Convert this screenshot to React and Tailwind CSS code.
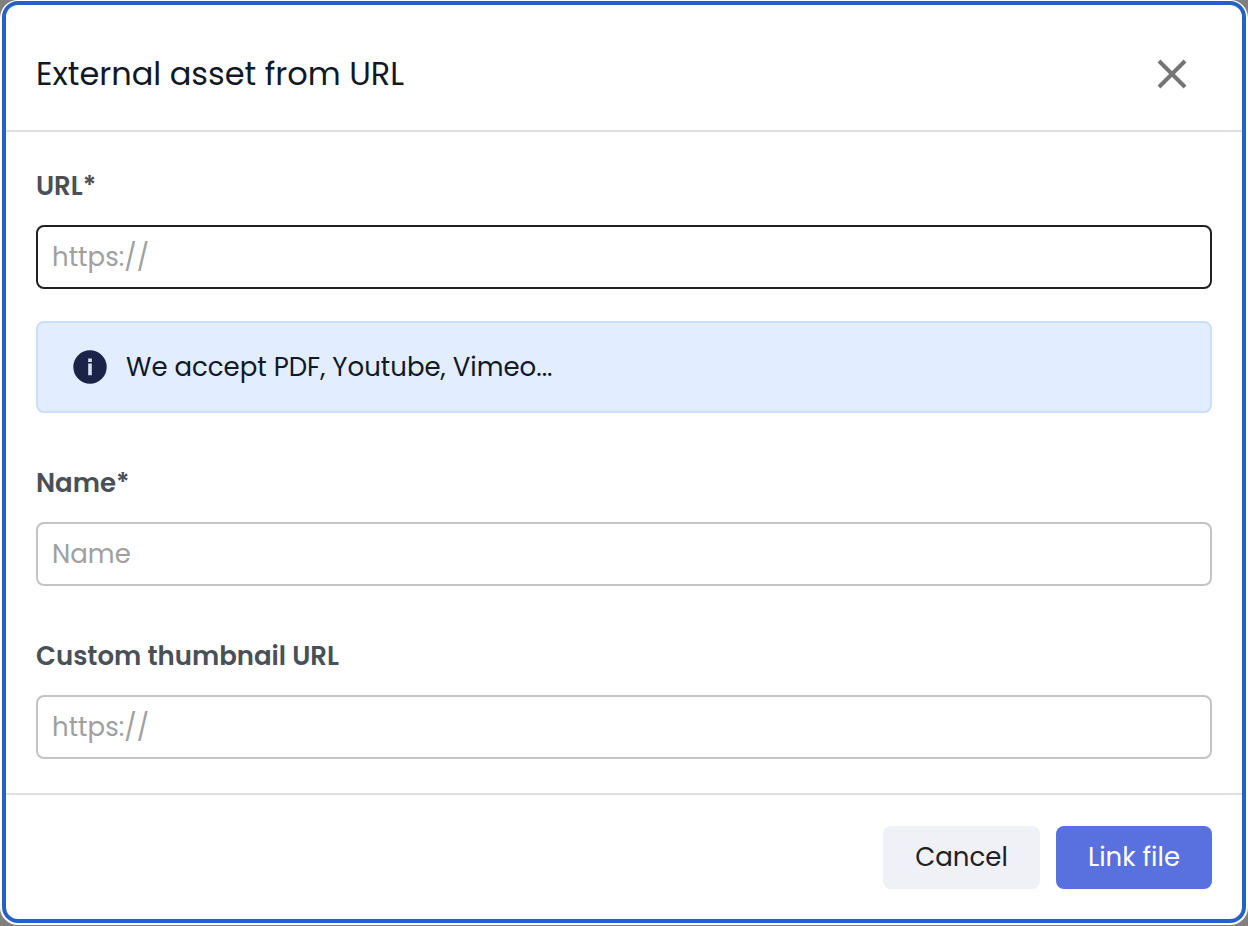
import React from "react";

function Field({ id, label, placeholder, strong }) {
  return (
    <div className="flex flex-col gap-[19px]">
      <label htmlFor={id} className="self-start text-[26px] leading-[39px] font-semibold text-[#495057]">
        {label}
      </label>
      <input
        id={id}
        type="text"
        placeholder={placeholder}
        className={
          "h-16 w-full rounded-lg border-2 bg-white px-3.5 text-[26px] text-[#212529] outline-none placeholder:text-[#a0a0a0] " +
          (strong ? "border-[#212121]" : "border-[#c4c4c4]")
        }
      />
    </div>
  );
}

export default function App() {
  return (
    <div className="flex min-h-screen flex-col bg-[#808080] pb-px font-[Poppins,Inter,sans-serif]">
      <div className="flex grow flex-col rounded-[18px] bg-white px-0.5 pt-px pb-0.5">
        <section
          role="dialog"
          aria-labelledby="dialog-title"
          className="flex grow flex-col rounded-2xl border-4 border-[#2463c5] bg-white"
        >
          <header className="flex items-center justify-between border-b-2 border-[#e0e0e0] pt-11 pr-[54px] pb-8 pl-[30px]">
            <h1 id="dialog-title" className="text-[32px] leading-[49px] text-[#111827]">
              External asset from URL
            </h1>
            <button type="button" aria-label="Close" className="text-[#757575]">
              <svg width="32" height="32" viewBox="0 0 32 32" fill="none" stroke="currentColor" strokeWidth="4">
                <path d="M3 3 29 29M29 3 3 29" />
              </svg>
            </button>
          </header>

          <form id="asset-form" className="flex grow flex-col gap-[51px] px-[30px] pt-[35px] pb-[34px]">
            <div className="flex flex-col gap-8">
              <Field id="url" label="URL*" placeholder="https://" strong />
              <div className="flex items-center gap-[19px] rounded-lg border-2 border-[#cbdffa] bg-[#e2eeff] px-[35px] py-6">
                <svg width="34" height="34" viewBox="0 0 34 34" aria-hidden="true">
                  <circle cx="17" cy="17" r="16.7" fill="#1c2348" />
                  <path d="M15.2 8.4h3.6v3.6h-3.6zM15.2 13.6h3.6v11.6h-3.6z" fill="#d3e0f5" />
                </svg>
                <p className="text-[26px] leading-[40px] text-[#111827]">We accept PDF, Youtube, Vimeo...</p>
              </div>
            </div>
            <Field id="name" label="Name*" placeholder="Name" />
            <Field id="thumbnail" label="Custom thumbnail URL" placeholder="https://" />
          </form>

          <footer className="flex justify-end gap-4 border-t-2 border-[#e0e0e0] px-[30px] pt-[31px] pb-[30px]">
            <button type="button" className="h-[63px] min-w-[157px] rounded-lg bg-[#f0f1f7] px-6 text-[26px] text-[#212121]">
              Cancel
            </button>
            <button type="submit" form="asset-form" className="h-[63px] min-w-[156px] rounded-lg bg-[#5871df] px-6 text-[26px] text-white">
              Link file
            </button>
          </footer>
        </section>
      </div>
    </div>
  );
}
